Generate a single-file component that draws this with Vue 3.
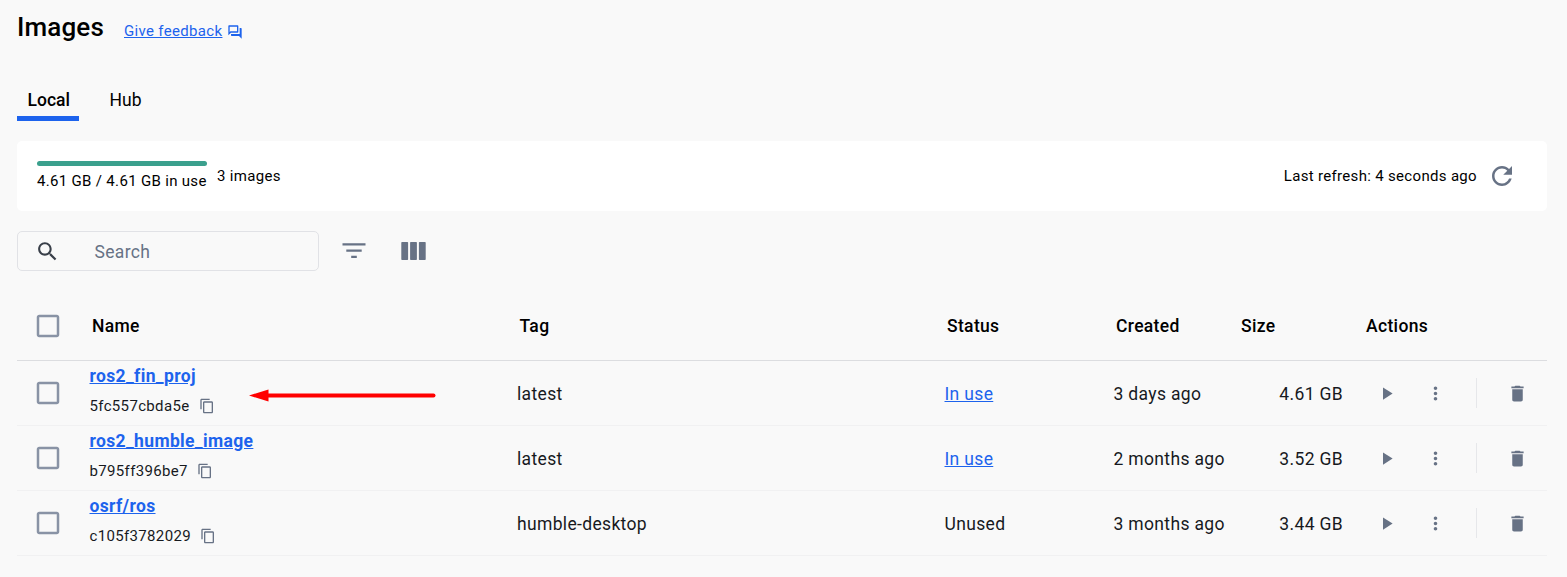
<script setup>
const rows = [
  { name: 'ros2_fin_proj', id: '5fc557cbda5e', tag: 'latest', used: true, created: '3 days ago', size: '4.61 GB' },
  { name: 'ros2_humble_image', id: 'b795ff396be7', tag: 'latest', used: true, created: '2 months ago', size: '3.52 GB' },
  { name: 'osrf/ros', id: 'c105f3782029', tag: 'humble-desktop', used: false, created: '3 months ago', size: '3.44 GB' },
]
</script>

<template>
  <main class="page">
    <header class="head">
      <h1>Images</h1>
      <a class="feedback">Give feedback</a>
      <svg class="chat" viewBox="0 0 24 24"><path d="M15 4v7H5.17L4 12.17V4h11m1-2H3c-.55 0-1 .45-1 1v14l4-4h10c.55 0 1-.45 1-1V3c0-.55-.45-1-1-1zm5 4h-2v9H6v2c0 .55.45 1 1 1h11l4 4V7c0-.55-.45-1-1-1z" /></svg>
    </header>

    <nav class="tabs">
      <span class="tab active">Local</span>
      <span class="tab">Hub</span>
    </nav>

    <section class="summary">
      <div class="usage">
        <div class="meter"></div>
        <span>4.61 GB / 4.61 GB in use</span>
      </div>
      <span class="count">3 images</span>
      <span class="refresh">Last refresh: 4 seconds ago</span>
      <svg class="reload" viewBox="0 0 24 24"><path d="M17.65 6.35C16.2 4.9 14.21 4 12 4c-4.42 0-7.99 3.58-7.99 8s3.57 8 7.99 8c3.73 0 6.84-2.55 7.73-6h-2.08c-.82 2.33-3.04 4-5.65 4-3.31 0-6-2.69-6-6s2.69-6 6-6c1.66 0 3.14.69 4.22 1.78L13 11h7V4l-2.35 2.35z" /></svg>
    </section>

    <div class="toolbar">
      <div class="search">
        <svg viewBox="0 0 24 24"><path d="M15.5 14h-.79l-.28-.27C15.41 12.59 16 11.11 16 9.5 16 5.91 13.09 3 9.5 3S3 5.91 3 9.5 5.91 16 9.5 16c1.61 0 3.09-.59 4.23-1.57l.27.28v.79l5 4.99L20.49 19l-4.99-5zm-6 0C7.01 14 5 11.99 5 9.5S7.01 5 9.5 5 14 7.01 14 9.5 11.99 14 9.5 14z" /></svg>
        <span>Search</span>
      </div>
      <svg class="filter" viewBox="0 0 24 18"><path d="M.5 1.200h23v2.300H.5zM4.300 7.500h15.400v2.300H4.300zM9.200 13.700h5.600V16H9.200z" /></svg>
      <svg class="columns" viewBox="0 0 25 18"><rect x=".3" width="6.800" height="18" rx=".7" /><rect x="9.100" width="6.800" height="18" rx=".7" /><rect x="17.900" width="6.800" height="18" rx=".7" /></svg>
    </div>

    <section class="table">
      <div class="row header">
        <svg class="check" viewBox="0 0 24 24"><path d="M19 5v14H5V5h14m0-2H5c-1.100 0-2 .9-2 2v14c0 1.100.9 2 2 2h14c1.100 0 2-.9 2-2V5c0-1.100-.9-2-2-2z" /></svg>
        <span>Name</span>
        <span>Tag</span>
        <span>Status</span>
        <span>Created</span>
        <span>Size</span>
        <span class="actions-title">Actions</span>
      </div>
      <div v-for="r in rows" :key="r.id" class="row">
        <svg class="check" viewBox="0 0 24 24"><path d="M19 5v14H5V5h14m0-2H5c-1.100 0-2 .9-2 2v14c0 1.100.9 2 2 2h14c1.100 0 2-.9 2-2V5c0-1.100-.9-2-2-2z" /></svg>
        <div class="name">
          <a>{{ r.name }}</a>
          <div class="hash">
            <span>{{ r.id }}</span>
            <svg viewBox="0 0 24 24"><path d="M16 1H4c-1.100 0-2 .9-2 2v14h2V3h12V1zm3 4H8c-1.100 0-2 .9-2 2v14c0 1.100.9 2 2 2h11c1.100 0 2-.9 2-2V7c0-1.100-.9-2-2-2zm0 16H8V7h11v14z" /></svg>
          </div>
        </div>
        <span class="cell">{{ r.tag }}</span>
        <span class="cell"><a v-if="r.used" class="link">In use</a><template v-else>Unused</template></span>
        <span class="cell">{{ r.created }}</span>
        <span class="cell size">{{ r.size }}</span>
        <div class="actions">
          <svg class="play" viewBox="0 0 24 24"><path d="M8 5v14l11-7z" /></svg>
          <svg class="more" viewBox="0 0 24 24"><path d="M12 8c1.100 0 2-.9 2-2s-.9-2-2-2-2 .9-2 2 .9 2 2 2zm0 2c-1.100 0-2 .9-2 2s.9 2 2 2 2-.9 2-2-.9-2-2-2zm0 6c-1.100 0-2 .9-2 2s.9 2 2 2 2-.9 2-2-.9-2-2-2z" /></svg>
          <i class="divider"></i>
          <svg class="trash" viewBox="0 0 24 24"><path d="M6 19c0 1.100.9 2 2 2h8c1.100 0 2-.9 2-2V7H6v12zM19 4h-3.500l-1-1h-5l-1 1H5v2h14V4z" /></svg>
        </div>
      </div>
    </section>

    <svg class="arrow" viewBox="0 0 188 14"><path d="M18 6.500H184.500" stroke="#f00" stroke-width="4" stroke-linecap="round" /><path d="M0 6.500L19.500 .5V12.500z" fill="#f00" /></svg>
  </main>
</template>

<style>
body {
  background: #f9f9f9;
}
</style>

<style scoped>
.page {
  position: relative;
  box-sizing: border-box;
  height: 577px;
  padding: 0 20px 0 17px;
  overflow: hidden;
  background: #f9f9f9;
  color: #000;
  font-family: Roboto, "Liberation Sans", sans-serif;
  font-size: 17.5px;
}
svg {
  display: block;
  flex: none;
  fill: #677285;
}
.head {
  display: flex;
  align-items: center;
  height: 54px;
}
h1 {
  margin: 0;
  width: 107px;
  font-size: 26px;
  font-weight: 500;
  letter-spacing: 0.15px;
}
.feedback {
  margin-top: 7px;
  font-size: 15px;
  letter-spacing: 0.33px;
  color: #1d63ed;
  text-decoration: underline;
}
.head .chat {
  width: 16px;
  height: 16px;
  margin: 9px 0 0 5px;
  fill: #1d63ed;
}
.tabs {
  display: flex;
  gap: 20px;
  height: 41px;
  margin-top: 26px;
}
.tab {
  box-sizing: border-box;
  padding: 0 10.500px;
  height: 41px;
  line-height: 40px;
}
.tab.active {
  width: 62px;
  font-weight: 500;
  border-bottom: 5px solid #1d63ed;
}
.summary {
  display: flex;
  align-items: center;
  box-sizing: border-box;
  height: 70px;
  margin-top: 20px;
  padding: 0 30px 0 20px;
  background: #fff;
  border-radius: 5px;
  font-size: 15px;
  letter-spacing: 0.32px;
  white-space: nowrap;
}
.usage {
  width: 170px;
  margin-right: 10px;
}
.usage span {
  display: block;
  margin-top: 5px;
  line-height: 20px;
}
.meter {
  height: 5px;
  background: #3ba08d;
  border-radius: 2.5px;
}
.refresh {
  margin-left: auto;
}
.reload {
  width: 30px;
  height: 30px;
  margin-left: 10px;
}
.toolbar {
  display: flex;
  align-items: center;
  height: 40px;
  margin-top: 20px;
}
.search {
  display: flex;
  align-items: center;
  box-sizing: border-box;
  width: 302px;
  height: 40px;
  padding-left: 16.500px;
  border: 1px solid #e1e2e6;
  border-radius: 5px;
  color: #677285;
}
.search svg {
  width: 25px;
  height: 25px;
  fill: #393f49;
}
.search span {
  margin-left: 35px;
  padding-top: 2px;
  letter-spacing: 0.35px;
}
.filter {
  width: 24px;
  height: 18px;
  margin-left: 23px;
}
.columns {
  width: 25px;
  height: 18px;
  margin-left: 35px;
}
.table {
  margin-top: 20px;
}
.row {
  display: grid;
  grid-template-columns: 72.500px 427.500px 427.500px 169px 125px 105px 1fr;
  align-items: center;
  box-sizing: border-box;
  height: 65px;
  border-bottom: 1px solid #f1f1f2;
  color: #17191e;
  letter-spacing: 0.34px;
}
.row.header {
  height: 70px;
  border-color: #dcdde0;
  color: #000;
  font-weight: 500;
}
.header span {
  padding-left: 2.500px;
}
.header .actions-title {
  padding-left: 22.500px;
}
.cell {
  padding-top: 2px;
}
.check {
  width: 30px;
  height: 30px;
  margin-left: 16px;
  fill: #8993a5;
}
.header .check {
  margin-top: 1px;
}
.name {
  height: 64px;
}
.name > a {
  display: block;
  width: max-content;
  line-height: 30px;
  font-weight: 700;
  color: #1d63ed;
  text-decoration: underline;
  letter-spacing: 0.35px;
}
.hash {
  display: flex;
  align-items: center;
  height: 30px;
  font-size: 15px;
}
.hash svg {
  width: 16px;
  height: 16px;
  margin-left: 9.500px;
}
.link {
  color: #1d63ed;
  text-decoration: underline;
}
.size {
  text-align: right;
  margin-right: 0.500px;
}
.actions {
  display: flex;
  align-items: center;
  margin-top: -1px;
}
.actions svg {
  width: 21px;
  height: 21px;
  margin-top: 1px;
}
.play {
  margin-left: 32px;
}
.more {
  margin-left: 28.500px;
}
.divider {
  width: 1px;
  height: 30px;
  margin-left: 29.500px;
  background: #e6e7ea;
}
.trash {
  margin-left: 30px;
}
.arrow {
  position: absolute;
  left: 249px;
  top: 389px;
  width: 188px;
  height: 14px;
}
</style>
